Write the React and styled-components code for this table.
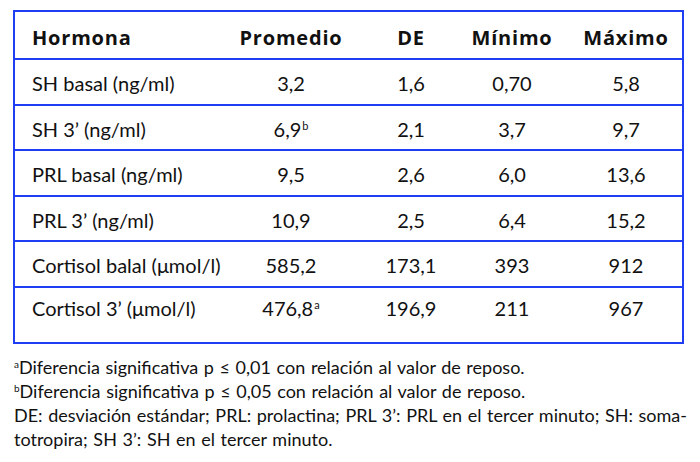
import React from 'react';
import styled, { createGlobalStyle } from 'styled-components';

const GlobalStyle = createGlobalStyle`
  body {
    margin: 0;
    background: #ffffff;
    font-family: Lato, "Open Sans", sans-serif;
    color: #111111;
  }
`;

const Page = styled.div`
  width: 700px;
  height: 462px;
  padding: 10px 0 0 13px;
  box-sizing: border-box;
`;

const Table = styled.div`
  width: 671px;
  border: 2px solid #1f3df2;
  box-sizing: border-box;
`;

const Row = styled.div`
  display: grid;
  grid-template-columns: 219px 114px 126px 76px 1fr;
  box-sizing: border-box;
  height: ${props => props.$header ? '48px' : props.$last ? '54.5px' : '45.5px'};
  padding-top: ${props => props.$header ? '5px' : props.$last ? '8px' : '3px'};
  align-items: ${props => props.$last ? 'start' : 'center'};
  border-bottom: ${props => props.$last ? 'none' : '2px solid #1f3df2'};
  font-size: 20px;
  font-family: ${props => props.$header ? '"Open Sans", Lato, sans-serif' : 'Lato, "Open Sans", sans-serif'};
  font-weight: ${props => props.$header ? 700 : 400};
  letter-spacing: ${props => props.$header ? '0.8px' : '0'};
`;

const Cell = styled.div`
  display: flex;
  align-items: baseline;
  justify-content: ${props => props.$left ? 'flex-start' : 'center'};
  padding-left: ${props => props.$left ? '17px' : props.$shift ? '20px' : '0'};
  white-space: nowrap;
`;

const Sup = styled.span`
  font-size: 11px;
  line-height: 1;
  position: relative;
  top: -7px;
  margin-left: 1px;
`;

const Notes = styled.div`
  margin-top: 11px;
  margin-left: 1px;
  width: 673px;
  font-size: 18px;
  line-height: 24px;
`;

const Note = styled.div`
  text-align: ${props => props.$justify ? 'justify' : 'left'};
  text-align-last: ${props => props.$justify ? 'justify' : 'auto'};
  white-space: ${props => props.$justify ? 'normal' : 'nowrap'};
  word-spacing: ${props => props.$justify ? '0' : '1px'};
`;

const NoteSup = styled.span`
  font-size: 10px;
  line-height: 1;
  position: relative;
  top: -6px;
`;

const rows = [
  ['SH basal (ng/ml)', '3,2', '', '1,6', '0,70', '5,8'],
  ['SH 3’ (ng/ml)', '6,9', 'b', '2,1', '3,7', '9,7'],
  ['PRL basal (ng/ml)', '9,5', '', '2,6', '6,0', '13,6'],
  ['PRL 3’ (ng/ml)', '10,9', '', '2,5', '6,4', '15,2'],
  ['Cortisol balal (μmol/l)', '585,2', '', '173,1', '393', '912'],
  ['Cortisol 3’ (μmol/l)', '476,8', 'a', '196,9', '211', '967'],
];

const App = () => {
  return (
    <Page>
      <GlobalStyle />
      <Table>
        <Row $header>
          <Cell $left>Hormona</Cell>
          <Cell>Promedio</Cell>
          <Cell>DE</Cell>
          <Cell>Mínimo</Cell>
          <Cell $shift>Máximo</Cell>
        </Row>
        { rows.map((r, i) => (
          <Row key={ i } $last={ i === rows.length - 1 }>
            <Cell $left>{ r[0] }</Cell>
            <Cell>{ r[1] }{ r[2] && <Sup>{ r[2] }</Sup> }</Cell>
            <Cell>{ r[3] }</Cell>
            <Cell>{ r[4] }</Cell>
            <Cell $shift>{ r[5] }</Cell>
          </Row>
        )) }
      </Table>
      <Notes>
        <Note><NoteSup>a</NoteSup>Diferencia significativa p ≤ 0,01 con relación al valor de reposo.</Note>
        <Note><NoteSup>b</NoteSup>Diferencia significativa p ≤ 0,05 con relación al valor de reposo.</Note>
        <Note $justify>DE: desviación estándar; PRL: prolactina; PRL 3’: PRL en el tercer minuto; SH: soma-</Note>
        <Note>totropira; SH 3’: SH en el tercer minuto.</Note>
      </Notes>
    </Page>
  );
};

export default App;
